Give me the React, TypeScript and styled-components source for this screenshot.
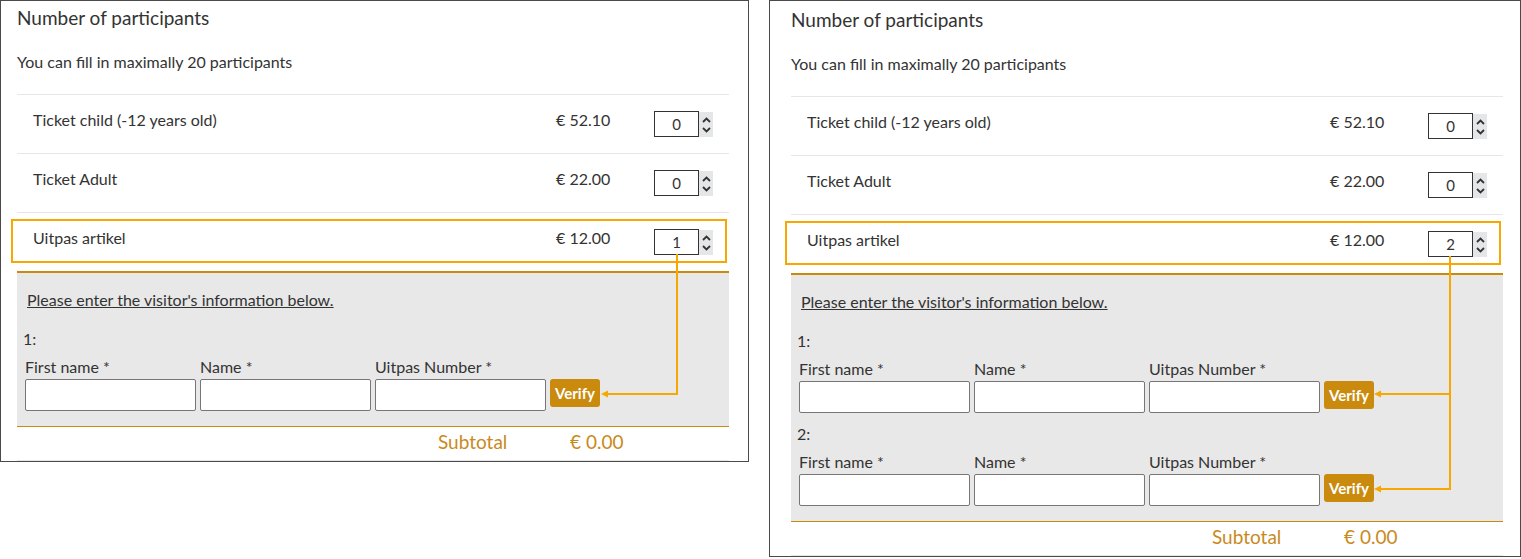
import styled, { createGlobalStyle } from 'styled-components'

const GlobalStyle = createGlobalStyle`
  body {
    margin: 0;
    background: #ffffff;
    font-family: Lato, "Open Sans", sans-serif;
    color: #333333;
  }
`

const Page = styled.main`
  display: flex;
  align-items: flex-start;
  gap: 20px;
`

const Panel = styled.section<{ $width: number; $top: number; $left: number; $right: number }>`
  position: relative;
  box-sizing: border-box;
  width: ${({ $width }) => $width}px;
  border: 1px solid #4a4a4a;
  padding: ${({ $top, $left, $right }) => `${$top}px ${$right}px 0 ${$left}px`};
`

const Title = styled.h2`
  margin: 0;
  font-size: 19px;
  line-height: 24px;
  font-weight: 400;
  color: #333;
`

const Hint = styled.p`
  margin: 22px 0 0;
  font-size: 16px;
  line-height: 20px;
`

const TicketList = styled.div`
  margin-top: 22px;
`

const TicketRow = styled.div`
  position: relative;
  box-sizing: border-box;
  height: 59px;
  border-top: 1px solid #e6e6e6;
  display: grid;
  grid-template-columns: 523px 98px 1fr;
  align-items: start;
  padding: 15px 0 0 16px;
`

const Highlight = styled.div`
  position: absolute;
  left: -6px;
  top: 6px;
  width: 716px;
  height: 44px;
  box-sizing: border-box;
  border: 2px solid #f6a800;
  pointer-events: none;
`

const TicketName = styled.span`
  font-size: 16px;
  line-height: 20px;
`

const Price = styled.span`
  font-size: 16px;
  line-height: 20px;
`

const Qty = styled.div`
  display: flex;
  margin-top: 1px;
`

const QtyInput = styled.input`
  box-sizing: border-box;
  width: 45px;
  height: 26px;
  border: 1px solid #333;
  border-radius: 0;
  padding: 0;
  text-align: center;
  font-family: Lato, sans-serif;
  font-size: 15px;
  color: #333;
  background: #fff;
  outline: none;
`

const Spinner = styled.div`
  width: 14px;
  height: 25px;
  margin-top: 1px;
  background: #e4e6e8;
  display: flex;
  flex-direction: column;
  align-items: center;
  justify-content: center;
  gap: 4px;
`

const Visitors = styled.div`
  background: #e8e8e8;
  border-top: 2px solid #c98a0e;
  border-bottom: 1px solid #c98a0e;
  padding: 17px 0 15px;
`

const Intro = styled.p`
  margin: 0 0 19px 10px;
  font-size: 16px;
  line-height: 20px;
  text-decoration: underline;
`

const ParticipantList = styled.div`
  display: grid;
  gap: 11px;
  padding-left: 6px;
`

const ParticipantNumber = styled.div`
  font-size: 16px;
  line-height: 20px;
`

const Fields = styled.div`
  display: flex;
  align-items: flex-end;
  gap: 4px;
  margin-top: 8px;
  padding-left: 2px;
`

const Field = styled.label`
  display: flex;
  flex-direction: column;
  gap: 2px;
  width: 171px;
`

const FieldLabel = styled.span`
  font-size: 16px;
  line-height: 20px;
  color: #333;
`

const TextInput = styled.input`
  box-sizing: border-box;
  height: 32px;
  border: 1px solid #767676;
  border-radius: 2px;
  background: #fff;
  outline: none;
`

const VerifyButton = styled.button`
  height: 28px;
  margin-bottom: 4px;
  padding: 0 5px;
  border: none;
  border-radius: 3px;
  background: #c98a0e;
  color: #fff;
  font-family: Lato, sans-serif;
  font-weight: 700;
  font-size: 15px;
`

const Subtotal = styled.div`
  display: grid;
  grid-template-columns: 421px 132px 1fr;
  padding: 3px 0 6px;
  border-bottom: 1px solid #e6e6e6;
  font-size: 19px;
  line-height: 24px;
  color: #c98a1c;
`

const Overlay = styled.svg`
  position: absolute;
  left: 0;
  top: 0;
  width: 100%;
  height: 100%;
  overflow: visible;
  pointer-events: none;
`

const ORANGE = '#f6a800'

function Chevron({ up }: { up?: boolean }) {
  return (
    <svg width="9" height="6" viewBox="0 0 9 6">
      <path
        d={up ? 'M1 5 L4.5 1.5 L8 5' : 'M1 1 L4.5 4.5 L8 1'}
        fill="none"
        stroke="#333"
        strokeWidth="1.8"
      />
    </svg>
  )
}

type Ticket = { name: string; price: string; qty: number; uitpas?: boolean }

const tickets: Ticket[] = [
  { name: 'Ticket child (-12 years old)', price: '€ 52.10', qty: 0 },
  { name: 'Ticket Adult', price: '€ 22.00', qty: 0 },
  { name: 'Uitpas artikel', price: '€ 12.00', qty: 1, uitpas: true },
]

type Arrow = { x: number; fromY: number; toY: number[]; tipX: number }

function Connector({ x, fromY, toY, tipX }: Arrow) {
  const bottom = Math.max(...toY)
  return (
    <Overlay>
      <line x1={x} y1={fromY} x2={x} y2={bottom} stroke={ORANGE} strokeWidth="2" />
      {toY.map((y) => (
        <g key={y}>
          <line x1={x + 1} y1={y} x2={tipX + 6} y2={y} stroke={ORANGE} strokeWidth="2" />
          <polygon points={`${tipX},${y} ${tipX + 7},${y - 3.5} ${tipX + 7},${y + 3.5}`} fill={ORANGE} />
        </g>
      ))}
    </Overlay>
  )
}

function Booking({ uitpasCount, arrow, ...panel }: {
  uitpasCount: number
  arrow: Arrow
  $width: number
  $top: number
  $left: number
  $right: number
}) {
  const participants = Array.from({ length: uitpasCount }, (_, i) => i + 1)
  return (
    <Panel {...panel}>
      <Title>Number of participants</Title>
      <Hint>You can fill in maximally 20 participants</Hint>
      <TicketList>
        {tickets.map((t) => (
          <TicketRow key={t.name}>
            <TicketName>{t.name}</TicketName>
            <Price>{t.price}</Price>
            <Qty>
              <QtyInput readOnly value={t.uitpas ? uitpasCount : t.qty} />
              <Spinner>
                <Chevron up />
                <Chevron />
              </Spinner>
            </Qty>
            {t.uitpas && <Highlight />}
          </TicketRow>
        ))}
      </TicketList>
      <Visitors>
        <Intro>Please enter the visitor's information below.</Intro>
        <ParticipantList>
          {participants.map((n) => (
            <div key={n}>
              <ParticipantNumber>{n}:</ParticipantNumber>
              <Fields>
                <Field>
                  <FieldLabel>First name *</FieldLabel>
                  <TextInput />
                </Field>
                <Field>
                  <FieldLabel>Name *</FieldLabel>
                  <TextInput />
                </Field>
                <Field>
                  <FieldLabel>Uitpas Number *</FieldLabel>
                  <TextInput />
                </Field>
                <VerifyButton>Verify</VerifyButton>
              </Fields>
            </div>
          ))}
        </ParticipantList>
      </Visitors>
      <Subtotal>
        <span />
        <span>Subtotal</span>
        <span>€ 0.00</span>
      </Subtotal>
      <Connector {...arrow} />
    </Panel>
  )
}

export default function App() {
  return (
    <>
      <GlobalStyle />
      <Page>
        <Booking
          $width={749}
          $top={5}
          $left={16}
          $right={19}
          uitpasCount={1}
          arrow={{ x: 676, fromY: 253, toY: [393], tipX: 600 }}
        />
        <Booking
          $width={752}
          $top={7}
          $left={21}
          $right={17}
          uitpasCount={2}
          arrow={{ x: 680, fromY: 255, toY: [393, 488], tipX: 604 }}
        />
      </Page>
    </>
  )
}
